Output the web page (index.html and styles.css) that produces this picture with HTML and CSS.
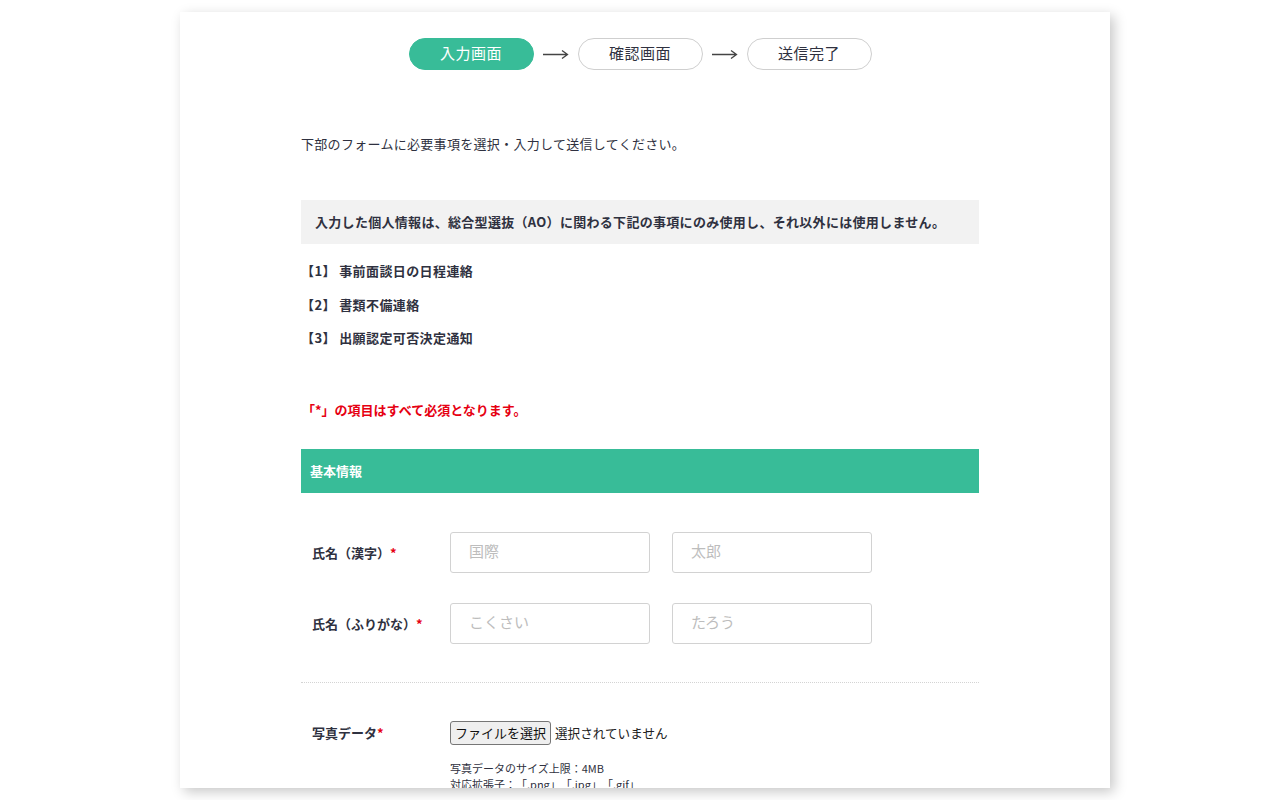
FILE: index.html
```html
<!DOCTYPE html>
<html lang="ja">
<head>
<meta charset="utf-8">
<title>入力画面</title>
<link rel="stylesheet" href="styles.css">
</head>
<body>
<div class="card">
  <div class="content">
    <div class="steps">
      <span class="step active">入力画面</span>
      <svg class="arrow" width="26" height="10" viewBox="0 0 26 10"><path d="M0 5.5H24M19 1.5L24.5 5.5L19 9.5" fill="none" stroke="#444" stroke-width="1.3"/></svg>
      <span class="step">確認画面</span>
      <svg class="arrow" width="26" height="10" viewBox="0 0 26 10"><path d="M0 5.5H24M19 1.5L24.5 5.5L19 9.5" fill="none" stroke="#444" stroke-width="1.3"/></svg>
      <span class="step">送信完了</span>
    </div>

    <p class="intro">下部のフォームに必要事項を選択・入力して送信してください。</p>

    <div class="notice">入力した個人情報は、総合型選抜（AO）に関わる下記の事項にのみ使用し、それ以外には使用しません。</div>

    <ul class="uses">
      <li>【1】 事前面談日の日程連絡</li>
      <li>【2】 書類不備連絡</li>
      <li>【3】 出願認定可否決定通知</li>
    </ul>

    <p class="required">「*」の項目はすべて必須となります。</p>

    <div class="section-bar">基本情報</div>

    <div class="row">
      <div class="label">氏名（漢字）<span class="star">*</span></div>
      <div class="fields">
        <input class="text" type="text" placeholder="国際">
        <input class="text" type="text" placeholder="太郎">
      </div>
    </div>
    <div class="row row2">
      <div class="label">氏名（ふりがな）<span class="star">*</span></div>
      <div class="fields">
        <input class="text" type="text" placeholder="こくさい">
        <input class="text" type="text" placeholder="たろう">
      </div>
    </div>

    <div class="sep"></div>

    <div class="row file-row">
      <div class="label">写真データ<span class="star">*</span></div>
      <div class="file-col">
        <div class="file">
          <button class="file-btn" type="button">ファイルを選択</button>
          <span class="file-status">選択されていません</span>
        </div>
        <p class="note">写真データのサイズ上限：4MB<br>対応拡張子：「.png」「.jpg」「.gif」</p>
      </div>
    </div>
  </div>
</div>
</body>
</html>
```

FILE: styles.css
```css
* { box-sizing: border-box; }
html, body { margin: 0; background: #fff; }
body {
  padding: 12px 0 12px 180px;
  font-family: "Noto Sans CJK JP", "Noto Sans", sans-serif;
  color: #2f3140;
  text-spacing-trim: space-all;
}
.card {
  width: 930px;
  height: 776px;
  overflow: hidden;
  background: #fff;
  box-shadow: 4px 4px 12px rgba(0,0,0,0.22);
  padding: 26px 131px 0 121px;
}
.content { width: 678px; }
.steps {
  display: flex;
  justify-content: center;
  align-items: center;
  height: 32px;
}
.step {
  width: 125px;
  height: 32px;
  border: 1px solid #cfcfcf;
  border-radius: 16px;
  display: flex;
  align-items: center;
  justify-content: center;
  padding-bottom: 3px;
  font-size: 15px;
  color: #2f3140;
  letter-spacing: 0.5px;
}
.step.active {
  background: #38bc98;
  border-color: #38bc98;
  color: #fff;
}
.arrow { margin: 0 9px 0 9px; }
.intro {
  margin: 64px 0 0;
  font-size: 13px;
  line-height: 20px;
  letter-spacing: 0.3px;
}
.notice {
  margin-top: 46px;
  height: 44px;
  background: #f2f2f2;
  padding: 0 0 2px 14px;
  display: flex;
  align-items: center;
  font-size: 13px;
  font-weight: bold;
  letter-spacing: 0.3px;
}
.uses {
  list-style: none;
  margin: 10px 0 0;
  padding: 0;
}
.uses li {
  font-size: 13px;
  font-weight: bold;
  line-height: 33.5px;
  letter-spacing: 0.4px;
}
.required {
  margin: 45px 0 0;
  color: #e60012;
  font-size: 13px;
  font-weight: bold;
  line-height: 20px;
  margin-left: 1px;
}
.section-bar {
  margin-top: 29px;
  height: 44px;
  background: #38bc98;
  color: #fff;
  font-size: 13px;
  font-weight: bold;
  display: flex;
  align-items: center;
  padding-left: 9px;
}
.row {
  display: flex;
  align-items: center;
  margin-top: 39px;
}
.row2 { margin-top: 30px; }
.label {
  width: 149px;
  padding-left: 11px;
  font-size: 13px;
  font-weight: bold;
}
.star { color: #e60012; }
.fields { display: flex; gap: 22px; }
.text {
  width: 200px;
  height: 41px;
  border: 1px solid #d2d2d2;
  border-radius: 3px;
  padding: 0 18px 3px;
  font-family: inherit;
  font-size: 15px;
  color: #333;
  outline: none;
}
.text::placeholder { color: #bdbdbd; }
.sep {
  margin-top: 38px;
  border-top: 1px dotted #d4d4d4;
}
.file-row { align-items: flex-start; margin-top: 38px; }
.file-row .label { line-height: 24px; }
.file { display: flex; align-items: center; height: 24px; }
.file-btn {
  height: 24px;
  width: 101px;
  padding: 0;
  background: #efefef;
  border: 1px solid #767676;
  border-radius: 3px;
  font-family: inherit;
  font-size: 13px;
  color: #111;
}
.file-status {
  margin-left: 4px;
  font-size: 12.6px;
  color: #222;
}
.note {
  margin: 15px 0 0;
  font-size: 11px;
  line-height: 16px;
  color: #2f3140;
}
```
